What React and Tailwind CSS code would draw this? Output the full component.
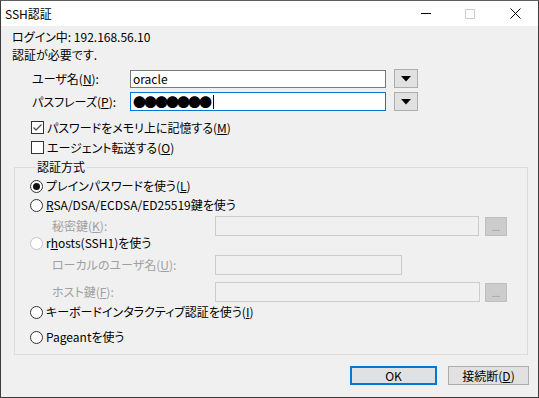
import React from "react";

const font = "font-['Noto_Sans_CJK_JP','Noto_Sans',sans-serif] [font-feature-settings:'palt']";

function Check({ checked }) {
  return (
    <span
      className={`flex h-[13px] w-[13px] items-center justify-center border bg-white ${
        checked ? "border-[#333333]" : "border-[#333333]"
      }`}
    >
      {checked && (
        <svg width="11" height="11" viewBox="0 0 11 11">
          <path d="M1.5 5.5 L4 8 L9.5 2.5" fill="none" stroke="#555555" strokeWidth="1.4" />
        </svg>
      )}
    </span>
  );
}

function Radio({ selected, disabled }) {
  return (
    <span
      className={`flex h-[13px] w-[13px] items-center justify-center rounded-full border bg-white ${
        disabled ? "border-[#c4c4c4]" : "border-[#333333]"
      }`}
    >
      {selected && <span className="h-[7px] w-[7px] rounded-full bg-[#111111]" />}
    </span>
  );
}

function Dropdown() {
  return (
    <span className="flex h-[19px] w-[24px] items-center justify-center border border-[#adadad] bg-[#e1e1e1]">
      <svg width="10" height="6" viewBox="0 0 10 6">
        <path d="M0 0 H10 L5 5.5 Z" fill="#000000" />
      </svg>
    </span>
  );
}

function DotsButton() {
  return (
    <span className="flex h-[19px] w-[22px] items-end justify-center border border-[#bfbfbf] bg-[#cccccc] pb-[3px] text-[9px] leading-[9px] text-[#8a8a8a]">
      ...
    </span>
  );
}

export default function App() {
  return (
    <div className={`${font} h-[398px] w-[539px] border border-[#3c3c3c] border-t-[#5f5f5f] bg-[#f0f0f0] text-[12px] text-black`}>
      {/* title bar */}
      <div className="flex h-[25px] items-center bg-white">
        <div className="pl-[4px] leading-[14px]">SSH認証</div>
        <div className="ml-auto flex items-center">
          <span className="mr-[34px] h-[1px] w-[10px] bg-black" />
          <span className="mr-[35px] h-[10px] w-[10px] border border-[#cccccc]" />
          <svg className="mr-[17px]" width="11" height="11" viewBox="0 0 11 11">
            <path d="M0.5 0.5 L10.5 10.5 M10.5 0.5 L0.5 10.5" stroke="#000000" strokeWidth="1" />
          </svg>
        </div>
      </div>

      <div className="pl-[11px]">
        <div className="mt-[3px] h-[16px] leading-[16px]">ログイン中: 192.168.56.10</div>
        <div className="mt-[2px] h-[16px] leading-[16px]">認証が必要です.</div>

        <div className="mt-[6px] flex h-[19px] items-center">
          <span className="w-[118px] pl-[20px]">
            ユーザ名(<u>N</u>):
          </span>
          <span className="flex h-[18px] w-[256px] items-center border border-[#7a7a7a] bg-white pl-[2px] text-[12px]">
            oracle
          </span>
          <span className="ml-[8px]">
            <Dropdown />
          </span>
        </div>

        <div className="mt-[4px] flex h-[19px] items-center">
          <span className="w-[118px] pl-[20px]">
            パスフレーズ(<u>P</u>):
          </span>
          <span className="flex h-[19px] w-[256px] items-center border border-[#0078d7] bg-white pl-[2px]">
            <span className="text-[13px] leading-[13px] tracking-[-2px]">●●●●●●●</span>
            <span className="ml-[3px] h-[14px] w-[1px] bg-black" />
          </span>
          <span className="ml-[8px]">
            <Dropdown />
          </span>
        </div>

        <div className="mt-[9px] flex h-[15px] items-center pl-[19px]">
          <Check checked />
          <span className="ml-[3px] leading-[15px]">
            パスワードをメモリ上に記憶する(<u>M</u>)
          </span>
        </div>
        <div className="mt-[5px] flex h-[15px] items-center pl-[19px]">
          <Check />
          <span className="ml-[3px] leading-[15px]">
            エージェント転送する(<u>O</u>)
          </span>
        </div>
      </div>

      <fieldset className="ml-[13px] mr-[10px] mt-[4px] border border-[#dcdcdc] pb-[10px] pl-[15px]">
        <legend className="ml-[6px] px-[1px] leading-[16px]">認証方式</legend>

        <div className="mt-[4px] flex h-[14px] items-center">
          <Radio selected />
          <span className="ml-[3px] leading-[14px]">
            プレインパスワードを使う(<u>L</u>)
          </span>
        </div>

        <div className="mt-[5px] flex h-[14px] items-center">
          <Radio />
          <span className="ml-[3px] leading-[14px]">
            <u>R</u>SA/DSA/ECDSA/ED25519鍵を使う
          </span>
        </div>

        <div className="mt-[4px] flex h-[20px] items-center">
          <span className="w-[185px] pl-[22px] text-[#a0a0a0]">
            秘密鍵(<u>K</u>):
          </span>
          <span className="h-[20px] w-[264px] border border-[#cccccc] bg-[#f0f0f0]" />
          <span className="ml-[6px]">
            <DotsButton />
          </span>
        </div>

        <div className="mt-0 flex h-[14px] items-center">
          <Radio disabled />
          <span className="ml-[3px] leading-[14px]">
            r<u>h</u>osts(SSH1)を使う
          </span>
        </div>

        <div className="mt-[5px] flex h-[20px] items-center">
          <span className="w-[185px] pl-[22px] text-[#a0a0a0]">
            ローカルのユーザ名(<u>U</u>):
          </span>
          <span className="h-[20px] w-[187px] border border-[#cccccc] bg-[#f0f0f0]" />
        </div>

        <div className="mt-[7px] flex h-[20px] items-center">
          <span className="w-[185px] pl-[22px] text-[#a0a0a0]">
            ホスト鍵(<u>F</u>):
          </span>
          <span className="h-[20px] w-[265px] border border-[#cccccc] bg-[#f0f0f0]" />
          <span className="ml-[5px]">
            <DotsButton />
          </span>
        </div>

        <div className="mt-[3px] flex h-[14px] items-center">
          <Radio />
          <span className="ml-[3px] leading-[14px]">
            キーボードインタラクティブ認証を使う(<u>I</u>)
          </span>
        </div>

        <div className="mt-[11px] flex h-[14px] items-center">
          <Radio />
          <span className="ml-[3px] leading-[14px]">Pageantを使う</span>
        </div>
      </fieldset>

      <div className="mr-[9px] mt-[11px] flex justify-end gap-[11px]">
        <button className="h-[19px] w-[87px] border-2 border-[#0078d7] bg-[#e1e1e1] text-[12px] leading-[15px]">
          OK
        </button>
        <button className="h-[19px] w-[81px] border border-[#adadad] bg-[#e1e1e1] text-[12px] leading-[17px]">
          接続断(<u>D</u>)
        </button>
      </div>
    </div>
  );
}
